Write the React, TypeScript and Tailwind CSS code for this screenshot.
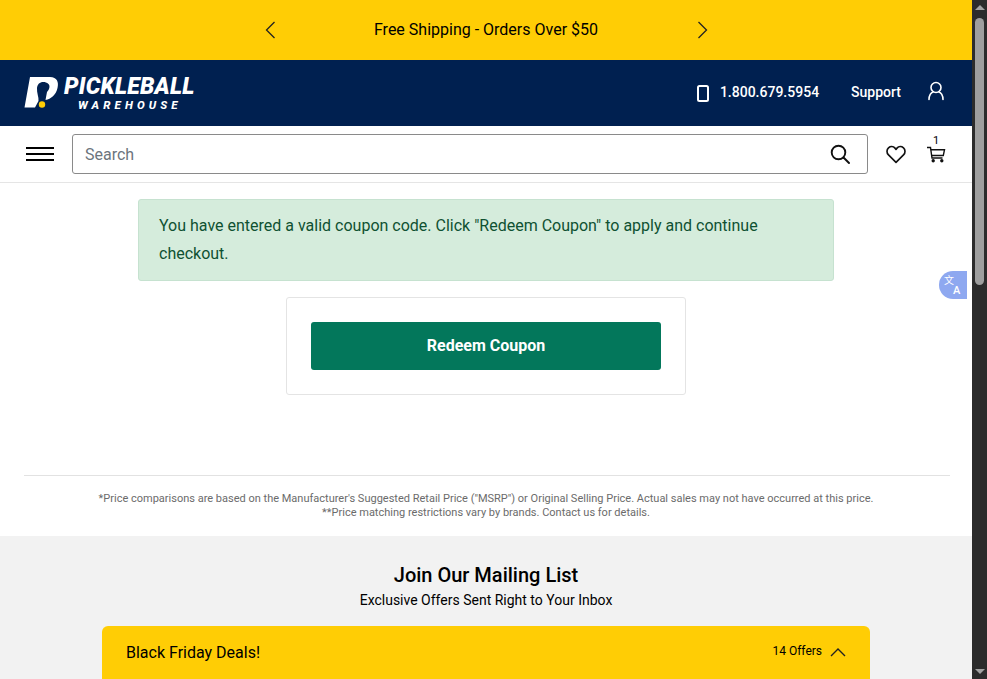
const font = { fontFamily: "Roboto, 'Liberation Sans', sans-serif" };

function Logo() {
  return (
    <div className="flex items-center">
      <svg width="36" height="34" viewBox="0 0 36 34" className="shrink-0">
        <path
          fill="#ffffff"
          d="M6 1H26C33 1 35 6 33.5 12C32 19 27 23 21.5 24L23 16C26 13 27 8 22 6.5C17 5 13.5 7.5 13 12C12.6 17 15 21 14.5 25L11 31.5H0.5Z"
        />
        <circle cx="18" cy="28.5" r="3.2" fill="#ffcd05" />
      </svg>
      <div className="ml-1 flex flex-col items-end italic text-white">
        <span className="text-[23px] leading-[22px] font-black tracking-[0.2px]">PICKLEBALL</span>
        <span className="mt-[2px] mr-[13px] text-[11.5px] leading-[11px] font-extrabold tracking-[4.1px]">WAREHOUSE</span>
      </div>
    </div>
  );
}

function Scrollbar() {
  return (
    <div className="flex h-full w-[15px] shrink-0 flex-col items-center bg-[#2c2c2c]">
      <div className="mt-[5px] h-0 w-0 border-x-[5px] border-b-[5px] border-x-transparent border-b-[#a3a3a3]" />
      <div className="mt-[8px] h-[267px] w-[9px] rounded-[5px] bg-[#9f9f9f]" />
      <div className="mt-auto mb-[5px] h-0 w-0 border-x-[5px] border-t-[5px] border-x-transparent border-t-[#a3a3a3]" />
    </div>
  );
}

export default function App() {
  return (
    <div className="relative flex h-[679px] w-[987px] overflow-hidden bg-white" style={font}>
      <div className="w-[972px] shrink-0">
        {/* Promo bar */}
        <div className="flex h-[60px] items-center justify-center bg-[#ffcd05] text-black">
          <svg width="11" height="18" viewBox="0 0 11 18" fill="none" stroke="#222222" strokeWidth="1.3">
            <path d="M9.5 1L1.5 9L9.5 17" />
          </svg>
          <div className="w-[421px] text-center text-base">Free Shipping - Orders Over $50</div>
          <svg width="11" height="18" viewBox="0 0 11 18" fill="none" stroke="#222222" strokeWidth="1.3">
            <path d="M1.5 1L9.5 9L1.5 17" />
          </svg>
        </div>

        {/* Header */}
        <div className="flex h-[66px] items-center bg-[#002050] pl-6 pr-[26px] text-white">
          <Logo />
          <div className="ml-auto flex items-center text-sm font-medium">
            <svg width="12" height="17" viewBox="0 0 12 17" fill="none" stroke="#ffffff" strokeWidth="2">
              <rect x="1" y="1" width="10" height="15" rx="1.5" />
            </svg>
            <span className="ml-[11px] mb-[2px]">1.800.679.5954</span>
            <span className="ml-8 mb-[2px]">Support</span>
            <svg width="20" height="20" viewBox="0 0 20 20" fill="none" stroke="#ffffff" strokeWidth="1.6" className="ml-[25px] mb-[5px]">
              <circle cx="10" cy="6.5" r="5" />
              <path d="M3 18.5C3 14.5 5 11.5 7 11M17 18.5C17 14.5 15 11.5 13 11" strokeLinecap="round" />
            </svg>
          </div>
        </div>

        {/* Search row */}
        <div className="flex h-[57px] items-center border-b border-[#e5e5e5] pl-[26px] pr-[26px]">
          <div className="flex w-[28px] flex-col gap-[4px]">
            <div className="h-[2px] bg-black" />
            <div className="h-[2px] bg-black" />
            <div className="h-[2px] bg-black" />
          </div>
          <div className="ml-[18px] flex h-10 w-[796px] items-center justify-between rounded-[3px] border border-[#8a8a8a] pl-3 pr-[17px]">
            <span className="mt-[1px] text-base text-[#6c757d]">Search</span>
            <svg width="20" height="20" viewBox="0 0 20 20" fill="none" stroke="#111111" strokeWidth="1.9">
              <circle cx="8.5" cy="8.5" r="6.8" />
              <path d="M13.5 13.5L19 19" strokeLinecap="round" />
            </svg>
          </div>
          <svg width="20" height="19" viewBox="0 0 24 22" fill="none" stroke="#111111" strokeWidth="2" strokeLinejoin="round" className="ml-[18px]">
            <path d="M12 20.5L3 11.5C0.5 9 0.7 5 3 3C5.4 1 8.8 1.2 10.8 3.4L12 4.8L13.2 3.4C15.2 1.2 18.6 1 21 3C23.3 5 23.5 9 21 11.5Z" />
          </svg>
          <div className="relative ml-[20px] h-[18px] w-[20px]">
            <span className="absolute -top-[11px] left-[7px] text-[11px] leading-[13px] text-black">1</span>
            <svg width="20" height="18" viewBox="0 0 20 18" fill="none" stroke="#111111" strokeWidth="1.4" className="absolute top-0 left-0">
              <path d="M1 2.5H4.5L6 13H16.5" />
              <path d="M4.8 4.8H18.5L17.3 10.5H5.6" />
              <circle cx="7.2" cy="15.8" r="1" fill="#111111" />
              <circle cx="15.8" cy="15.8" r="1" fill="#111111" />
            </svg>
          </div>
        </div>

        {/* Coupon alert */}
        <div className="mx-auto mt-4 h-[82px] w-[696px] rounded-[3px] border border-[#c6e2d0] bg-[#d5ecdc] px-5 py-3 text-base leading-7 text-[#0f5132]">
          You have entered a valid coupon code. Click "Redeem Coupon" to apply and continue checkout.
        </div>

        {/* Redeem box */}
        <div className="mx-auto mt-4 h-[98px] w-[400px] rounded-[3px] border border-[#e4e4e4] p-6">
          <button className="h-12 w-full rounded-[3px] bg-[#03775b] text-base font-bold text-white">Redeem Coupon</button>
        </div>

        {/* Disclaimer */}
        <div className="mt-20 ml-6 mr-[22px] border-t border-[#e2e2e2] pt-4 pr-[2px] pb-[16px] text-center text-[11px] leading-[14px] text-[#6b6b6b]">
          <p>*Price comparisons are based on the Manufacturer's Suggested Retail Price ("MSRP") or Original Selling Price. Actual sales may not have occurred at this price.</p>
          <p>**Price matching restrictions vary by brands. Contact us for details.</p>
        </div>

        {/* Mailing list */}
        <div className="h-[200px] bg-[#f2f2f2] pt-[26px] text-center text-black">
          <h2 className="text-xl leading-[26px] font-medium">Join Our Mailing List</h2>
          <p className="mt-[2px] text-sm leading-[20px]">Exclusive Offers Sent Right to Your Inbox</p>
          <div className="mx-auto mt-4 flex h-[60px] w-[768px] items-center justify-between rounded-t-[6px] bg-[#ffcd05] pl-6 pr-6 pb-[6px]">
            <span className="text-base">Black Friday Deals!</span>
            <div className="mb-[2px] flex items-center gap-2 text-xs">
              <span className="mb-[2px]">14 Offers</span>
              <svg width="16" height="10" viewBox="0 0 16 10" fill="none" stroke="#222222" strokeWidth="1.4">
                <path d="M1 9L8 2L15 9" />
              </svg>
            </div>
          </div>
        </div>
      </div>

      <Scrollbar />

      {/* Translate widget */}
      <div className="absolute top-[271px] left-[939px] h-[28px] w-[28px] rounded-l-full bg-[#8ea8f0] text-white">
        <span className="absolute top-[4px] left-[5px] text-[10px] leading-[10px]" style={{ fontFamily: "'Noto Sans CJK SC', sans-serif" }}>文</span>
        <span className="absolute top-[14px] left-[14px] text-[11px] leading-[11px] font-medium">A</span>
      </div>
    </div>
  );
}
